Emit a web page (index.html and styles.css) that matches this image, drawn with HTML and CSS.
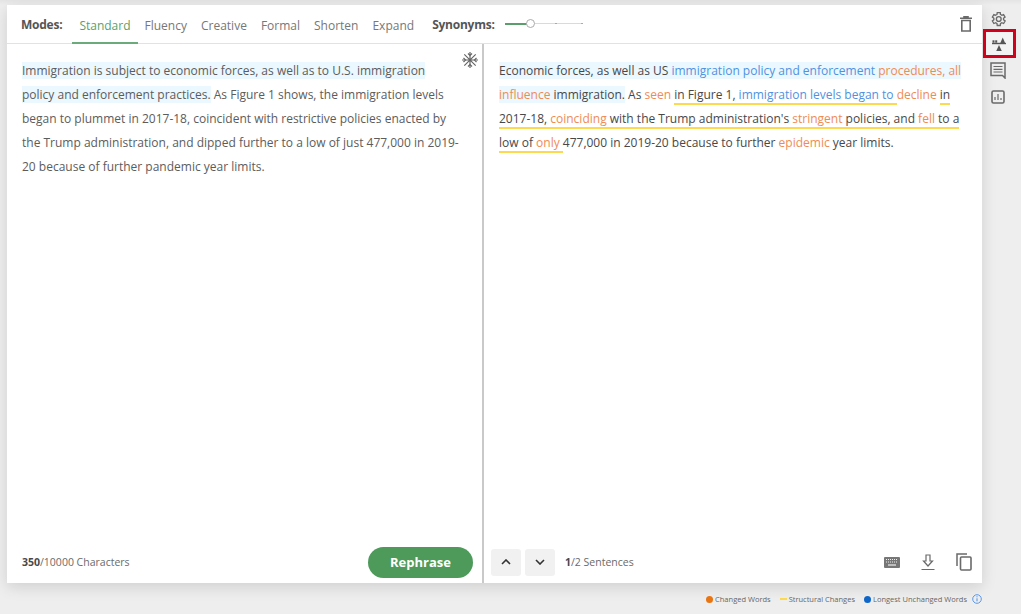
FILE: index.html
```html
<!DOCTYPE html>
<html lang="en">
<head>
<meta charset="utf-8">
<title>Paraphraser</title>
<link rel="stylesheet" href="styles.css">
</head>
<body>
<div class="app">
  <main class="card">
    <header class="toolbar">
      <strong class="label">Modes:</strong>
      <nav class="tabs">
        <a class="tab active">Standard</a>
        <a class="tab">Fluency</a>
        <a class="tab">Creative</a>
        <a class="tab">Formal</a>
        <a class="tab">Shorten</a>
        <a class="tab">Expand</a>
      </nav>
      <strong class="label syn">Synonyms:</strong>
      <div class="slider"><i class="fill"></i><i class="knob"></i><i class="tick t1"></i><i class="tick t2"></i></div>
      <svg class="trash" viewBox="0 0 12 16" width="12" height="16"><path d="M0 2.200h12M4 2.200V.8h4v1.400M1.800 4.500h8.400V15H1.800z" fill="none" stroke="#6a6a6a" stroke-width="1.600"/></svg>
    </header>
    <div class="panes">
      <section class="pane left">
        <svg class="freeze" viewBox="0 0 16 16" width="16" height="16"><g stroke="#666" stroke-width="1.200" fill="none"><path d="M8 0v16M0 8h16M2.300 2.300l11.400 11.400M13.700 2.300L2.300 13.700"/><path d="M6 1.500l2 2 2-2M6 14.500l2-2 2 2M1.500 6l2 2-2 2M14.500 6l-2 2 2 2"/></g></svg>
        <p class="text"><span class="hl">Immigration is subject to economic forces, as well as to U.S. immigration </span><span class="hl">policy and enforcement practices.</span> As Figure 1 shows, the immigration levels began to plummet in 2017-18, coincident with restrictive policies enacted by the Trump administration, and dipped further to a low of just 477,000 in 2019-20 because of further pandemic year limits.</p>
        <footer class="foot">
          <span class="count"><b>350</b>/10000 Characters</span>
          <button class="go">Rephrase</button>
        </footer>
      </section>
      <section class="pane right">
        <p class="text dark"><span class="hl">Economic forces, as well as US </span><span class="hl u">immigration policy and enforcement </span><span class="hl c">procedures, all </span><span class="hl c">influence </span><span class="hl">immigration.</span> As <span class="c">seen</span> <span class="s">in Figure 1, </span><span class="s u">immigration levels began to </span><span class="c">decline</span> <span class="s">in </span><span class="s">2017-18, </span><span class="s c">coinciding </span><span class="s">with the Trump administration's </span><span class="s c">stringent </span><span class="s">policies, and </span><span class="s c">fell </span><span class="s">to a </span><span class="s">low of </span><span class="s c">only </span>477,000 in 2019-20 because to further <span class="c">epidemic</span> year limits.</p>
        <footer class="foot rightfoot">
          <button class="nav"><svg viewBox="0 0 10 6" width="10" height="6"><path d="M1 5l4-4 4 4" fill="none" stroke="#333" stroke-width="1.600"/></svg></button>
          <button class="nav"><svg viewBox="0 0 10 6" width="10" height="6"><path d="M1 1l4 4 4-4" fill="none" stroke="#333" stroke-width="1.600"/></svg></button>
          <span class="count sent"><b>1</b>/2 Sentences</span>
          <span class="tools">
            <svg viewBox="0 0 16 11" width="16" height="11"><rect width="16" height="11" rx="1" fill="#777"/><path d="M2 2.500h12M2 5h12" stroke="#eee" stroke-width="1" stroke-dasharray="1 1"/><path d="M4 8h8" stroke="#eee" stroke-width="1.200"/></svg>
            <svg viewBox="0 0 14 17" width="14" height="17"><path d="M5 1h4v6h2.500L7 12 2.500 7H5zM0.500 15.500h13" fill="none" stroke="#6a6a6a" stroke-width="1.200"/></svg>
            <svg viewBox="0 0 16 18" width="16" height="18"><path d="M1 13V1h10" fill="none" stroke="#6a6a6a" stroke-width="1.500"/><rect x="4.500" y="4" width="10.500" height="13" rx="1" fill="none" stroke="#6a6a6a" stroke-width="1.600"/></svg>
          </span>
        </footer>
      </section>
    </div>
  </main>
  <aside class="side">
    <svg class="ic" viewBox="0 0 24 24" width="18" height="18"><path d="M19.400 13a7.500 7.500 0 0 0 0-2l2-1.600-2-3.400-2.400 1a7.500 7.500 0 0 0-1.700-1L15 3.400h-4L10.600 6a7.500 7.500 0 0 0-1.700 1l-2.400-1-2 3.400 2 1.600a7.500 7.500 0 0 0 0 2l-2 1.600 2 3.400 2.400-1a7.500 7.500 0 0 0 1.700 1l.4 2.600h4l.4-2.600a7.500 7.500 0 0 0 1.700-1l2.400 1 2-3.400z" fill="none" stroke="#6a6a6a" stroke-width="1.800"/><circle cx="13" cy="12" r="3.200" fill="none" stroke="#6a6a6a" stroke-width="1.800"/></svg>
    <div class="selected"><svg viewBox="0 0 14 14" width="14" height="14"><path d="M7 8l2.800 6H4.200z" fill="#555"/><path d="M0 6.500h14" stroke="#555" stroke-width="1.400"/><rect x="0.500" y="3.300" width="2" height="2.400" fill="#555"/><rect x="3.200" y="3.300" width="2" height="2.400" fill="#555"/><path d="M8.300 5.900l2.400-5.400 2.400 5.400z" fill="#555"/></svg></div>
    <svg class="ic cmt" viewBox="0 0 16 17" width="16" height="17"><path d="M1 1h14v15l-2.500-2.500H1z" fill="none" stroke="#6a6a6a" stroke-width="1.500"/><path d="M3.500 4.500h9M3.500 7.300h9M3.500 10h9" stroke="#6a6a6a" stroke-width="1.200"/></svg>
    <svg class="ic last" viewBox="0 0 14 14" width="14" height="14"><rect x="1" y="1" width="12" height="12" rx="1.500" fill="none" stroke="#6a6a6a" stroke-width="1.600"/><path d="M4 10V7M7 10V4M10 10V8" stroke="#6a6a6a" stroke-width="1.200"/></svg>
  </aside>
</div>
<div class="legend">
  <span class="dot o"></span><span class="lg">Changed Words</span>
  <span class="dash"></span><span class="lg">Structural Changes</span>
  <span class="dot b"></span><span class="lg last-lg">Longest Unchanged Words</span>
  <svg class="info" viewBox="0 0 10 10" width="10" height="10"><circle cx="5" cy="5" r="4.300" fill="none" stroke="#4a8fe8" stroke-width="0.900"/><path d="M5 4.300v3M5 2.300v1" stroke="#4a8fe8" stroke-width="1"/></svg>
</div>
</body>
</html>
```
FILE: styles.css
```css
* { box-sizing: border-box; }
html, body { height: 100%; }
body {
  margin: 0;
  overflow: hidden;
  padding-top: 5px;
  padding-left: 7px;
  background: linear-gradient(#e4e4e4 0, #eeeeee 5px);
  font-family: "Open Sans", sans-serif;
  font-size: 12px;
  color: #555;
}
.app { display: flex; align-items: flex-start; }
.card {
  width: 975px;
  height: 578px;
  background: #fff;
  display: flex;
  flex-direction: column;
  box-shadow: 0 4px 14px rgba(0, 0, 0, 0.13);
}
.toolbar {
  height: 39px;
  flex: none;
  display: flex;
  align-items: stretch;
  padding-left: 14px;
  border-bottom: 1px solid #e2e2e2;
}
.label { align-self: center; color: #555; font-weight: 700; font-size: 12px; letter-spacing: -0.02em; }
.tabs { display: flex; margin-left: 10px; }
.tab {
  display: flex;
  align-items: center;
  padding: 4px 7px 0;
  color: #777;
  font-size: 12px;
  height: 39px;
  border-bottom: 2px solid transparent;
}
.tab.active {
  color: #5a9f6b;
  border-bottom-color: #6bab7b;
}
.syn { margin-left: 11px; }
.slider {
  position: relative;
  align-self: center;
  width: 78px;
  height: 10px;
  margin-left: 10px;
}
.slider::before {
  content: "";
  position: absolute;
  left: 0; right: 0; top: 4px;
  height: 1px;
  background: #dadada;
}
.fill { position: absolute; left: 0; top: 4px; width: 22px; height: 2px; background: #5a9f6b; }
.knob {
  position: absolute; left: 21px; top: 0;
  width: 9px; height: 9px;
  border-radius: 50%;
  background: #fff;
  border: 1px solid #aaa;
}
.tick { position: absolute; top: 4px; width: 2px; height: 1px; background: #aaa; }
.t1 { left: 50px; }
.t2 { left: 76px; }
.trash { margin-left: auto; margin-right: 10px; align-self: center; }
.panes { flex: 1; display: flex; min-height: 0; }
.pane { position: relative; display: flex; flex-direction: column; }
.left { width: 477px; border-right: 2px solid #c9c9c9; padding: 15px 22px 0 15px; }
.right { flex: 1; padding: 15px 15px 0 15px; }
.freeze { position: absolute; right: 4px; top: 8px; }
.text { margin: 0; flex: 1; font-size: 12px; line-height: 24px; color: #5c5c5c; }
.dark { color: #484848; }
.hl { background: #ebf8ff; }
.u { color: #4f92e0; }
.c { color: #ee8b55; }
.s { border-bottom: 2px solid #fdd94f; }
.foot {
  height: 42px;
  display: flex;
  align-items: center;
  justify-content: space-between;
  font-size: 10.500px;
}
.count { color: #6a6a6a; font-size: 10.500px; }
.count b { color: #484848; }
.go {
  width: 105px;
  height: 31px;
  margin-right: -13px;
  border: 0;
  border-radius: 16px;
  background: #4d9a5a;
  color: #fff;
  font: 700 13px "Open Sans", sans-serif;
}
.rightfoot { justify-content: flex-start; gap: 4px; margin-left: -8px; }
.nav {
  width: 30px;
  height: 27px;
  padding: 0;
  border: 0;
  border-radius: 3px;
  background: #f1f1f1;
  display: flex;
  align-items: center;
  justify-content: center;
}
.sent { margin-left: 6px; }
.tools { margin-left: auto; display: flex; align-items: center; gap: 21px; margin-right: -5px; }
.side {
  width: 33px;
  display: flex;
  flex-direction: column;
  align-items: center;
  padding-top: 5px;
  margin-left: 1px;
}
.selected {
  width: 33px;
  height: 29px;
  margin-top: 1px;
  padding-right: 2px;
  border: 3px solid #d0021b;
  background: #f3f3f3;
  display: flex;
  align-items: center;
  justify-content: center;
}
.ic { flex: none; margin-right: 3px; }
.cmt { margin-top: 4px; }
.last { margin-top: 11px; }
.legend {
  display: flex;
  align-items: center;
  justify-content: flex-end;
  width: 975px;
  margin-top: 11px;
  font-size: 7.500px;
  color: #666;
}
.dot { width: 7px; height: 7px; border-radius: 50%; margin-right: 2px; }
.o { background: #e87511; }
.b { background: #0f66c9; }
.dash { width: 7px; height: 2px; background: #fdd94f; margin-right: 2px; }
.lg { margin-right: 9px; }
.last-lg { margin-right: 5px; }
```
